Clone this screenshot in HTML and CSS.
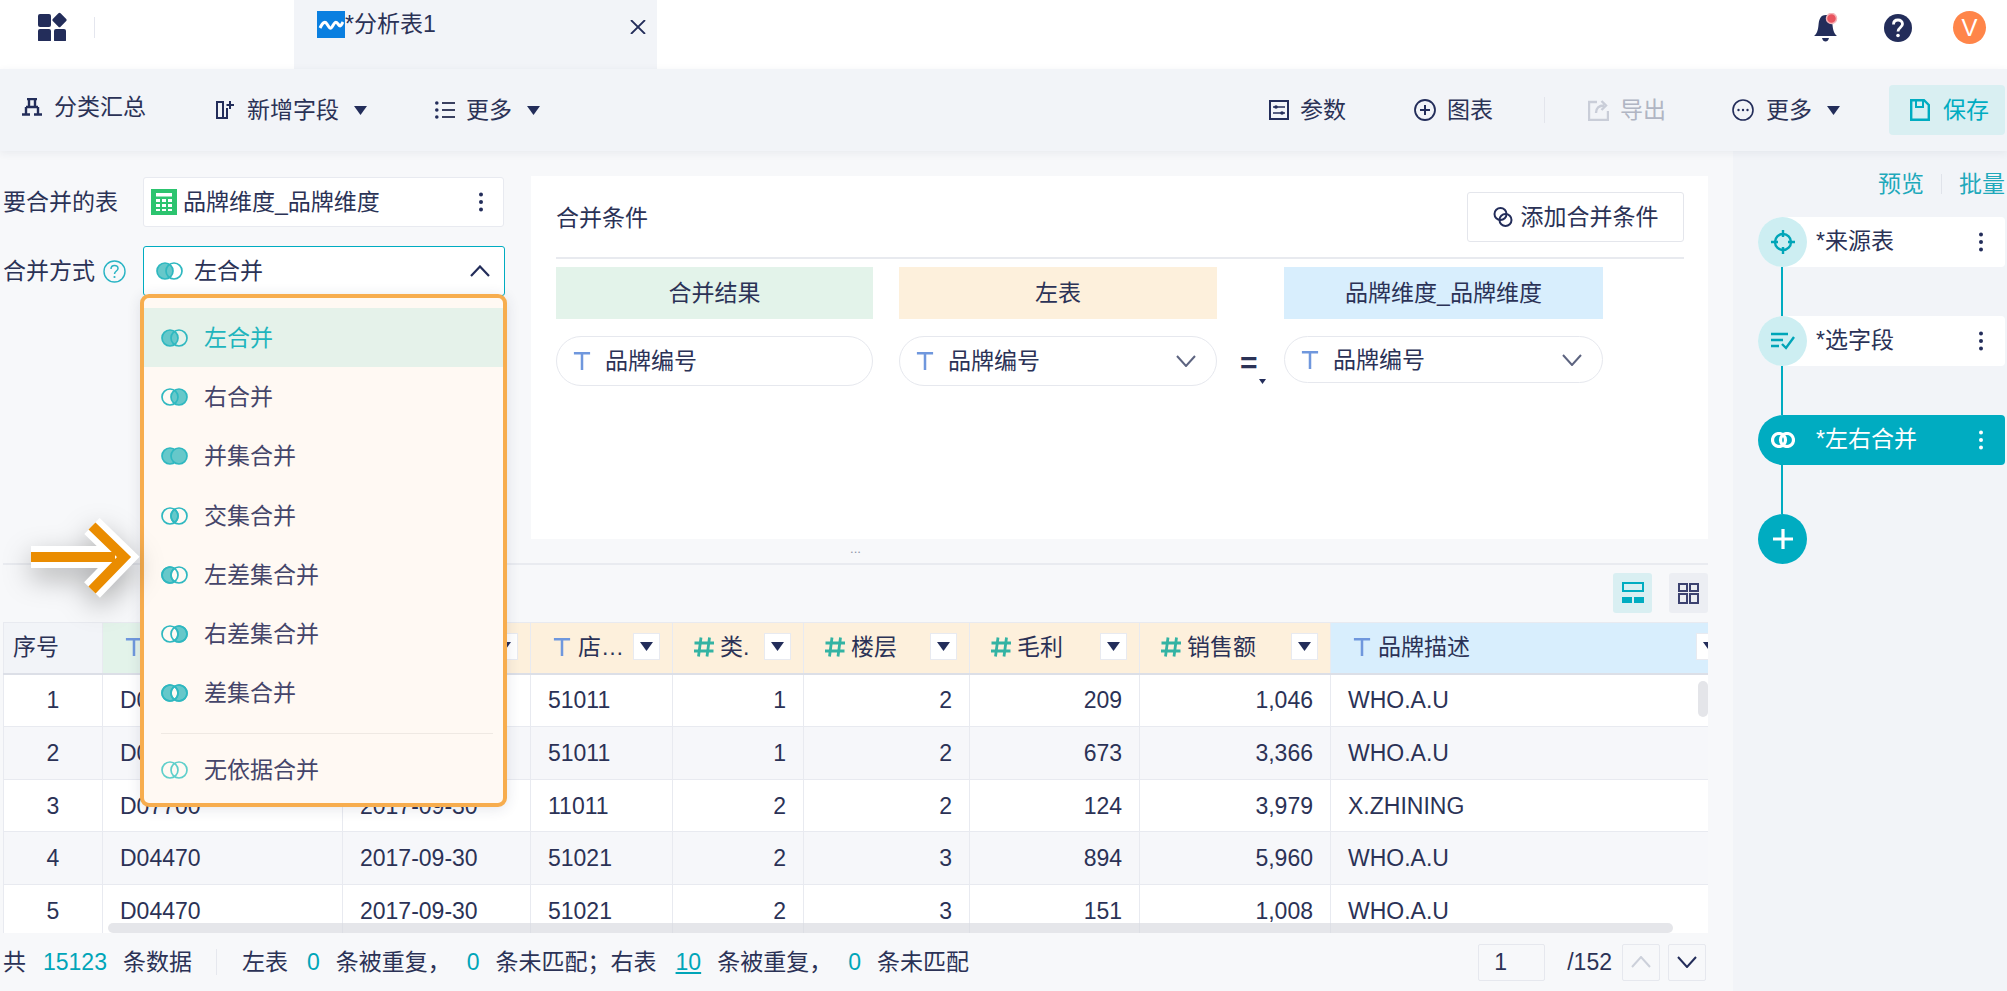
FILE: index.html
```html
<!DOCTYPE html>
<html lang="zh-CN">
<head>
<meta charset="utf-8">
<title>分析表1</title>
<link rel="stylesheet" href="styles.css">
</head>
<body>
<svg class="defs" aria-hidden="true">
  <symbol id="t" viewBox="0 0 20 22"><path d="M1 2.500H19M10 2.500V21" fill="none" stroke="#6f97dd" stroke-width="2.800"/></symbol>
  <symbol id="h" viewBox="0 0 22 22"><path d="M8 1.500 5.500 20.500M16.500 1.500 14 20.500M1.500 7H21M1 15H20.500" fill="none" stroke="#33b3a3" stroke-width="2.800"/></symbol>
  <symbol id="caret" viewBox="0 0 13 9"><path d="M0 0H13L6.500 9Z" fill="#232d5a"/></symbol>
  <symbol id="kebab" viewBox="0 0 4 20"><circle cx="2" cy="2.500" r="2"/><circle cx="2" cy="10" r="2"/><circle cx="2" cy="17.500" r="2"/></symbol>
  <symbol id="chev" viewBox="0 0 20 12"><path d="M1 1 10 11 19 1" fill="none" stroke="#5d6480" stroke-width="2"/></symbol>
</svg>

<header class="tabs">
  <div class="brand">
    <svg class="logo" width="30" height="30" viewBox="0 0 30 30"><rect x="0" y="3" width="13" height="13" rx="2"/><rect x="0" y="18" width="13" height="13" rx="2"/><rect x="16" y="18" width="12" height="13" rx="2"/><rect x="16" y="3.500" width="11" height="11" rx="1.500" transform="rotate(45 21.500 9)"/></svg>
    <span class="brand-sep"></span>
  </div>
  <div class="tab">
    <svg class="tab-icon" width="28" height="27" viewBox="0 0 28 27"><rect width="28" height="27" fill="#0a7fe0"/><path d="M3 17C6 11 8 10 10 13S13 19 15 16 18 9 21 13 24 14 26 11" fill="none" stroke="#fff" stroke-width="3"/></svg>
    <span>*分析表1</span>
    <svg class="tab-close" width="16" height="14" viewBox="0 0 16 14"><path d="M1 0 15 14M15 0 1 14" stroke="#232d5a" stroke-width="1.800" fill="none"/></svg>
  </div>
  <div class="top-icons">
    <svg width="26" height="30" viewBox="0 0 26 30"><path d="M13 2C7 2 6 7 5.500 12 5 18 3.500 21 1 23H24C21.500 21 20 18 19.500 12 19 7 18 2 13 2Z" fill="#232d5a"/><path d="M9 25H16Q15 28.500 12.500 28.500 10 28.500 9 25Z" fill="#232d5a"/><circle cx="18.500" cy="5.500" r="5" fill="#e8555f" stroke="#f4b4b8" stroke-width="1.500"/></svg>
    <svg class="help" width="28" height="28" viewBox="0 0 28 28"><circle cx="14" cy="14" r="14" fill="#232d5a"/><path d="M9.500 10.500C9.500 7.500 11.500 6 14 6 16.500 6 18.500 7.500 18.500 10 18.500 13.500 14 13.500 14 17.500" fill="none" stroke="#fff" stroke-width="2.800"/><circle cx="14" cy="21.500" r="1.800" fill="#fff"/></svg>
    <span class="avatar">V</span>
  </div>
</header>

<nav class="toolbar">
  <div class="tool tool-first">
    <svg width="20" height="18" viewBox="0 0 20 18"><path d="M5 1H15M7 1V9M13 1V9M4 9H16M4 9V16M16 9V16M0 16.500H8M12 16.500H20" fill="none" stroke="#232d5a" stroke-width="2.400"/></svg>
    <span>分类汇总</span>
  </div>
  <div class="tool tool-add">
    <svg width="18" height="18" viewBox="0 0 18 18"><path d="M12 17H1V1H7V17M11 7V17" fill="none" stroke="#232d5a" stroke-width="2"/><path d="M14 0V8M10.500 4H18" fill="none" stroke="#232d5a" stroke-width="2"/></svg>
    <span>新增字段</span>
    <svg class="caret"><use href="#caret"/></svg>
  </div>
  <div class="tool tool-list">
    <svg width="20" height="18" viewBox="0 0 20 18"><circle cx="1.800" cy="2" r="1.800" fill="#232d5a"/><circle cx="1.800" cy="9" r="1.800" fill="#232d5a"/><circle cx="1.800" cy="16" r="1.800" fill="#232d5a"/><path d="M7 2H20M7 9H20M7 16H20" stroke="#3a4060" stroke-width="2"/></svg>
    <span>更多</span>
    <svg class="caret"><use href="#caret"/></svg>
  </div>
  <div class="tool tool-right">
    <svg width="20" height="20" viewBox="0 0 20 20"><rect x="1" y="1" width="18" height="18" fill="none" stroke="#232d5a" stroke-width="2"/><path d="M4 7H16M4 13H16" stroke="#232d5a" stroke-width="1.600"/><circle cx="7" cy="7" r="1.800" fill="#232d5a"/><circle cx="13" cy="13" r="1.800" fill="#232d5a"/></svg>
    <span>参数</span>
  </div>
  <div class="tool tool-chart">
    <svg width="22" height="22" viewBox="0 0 22 22"><circle cx="11" cy="11" r="10" fill="none" stroke="#232d5a" stroke-width="1.800"/><path d="M11 6V16M6 11H16" stroke="#232d5a" stroke-width="2"/></svg>
    <span>图表</span>
  </div>
  <span class="tool-sep"></span>
  <div class="tool tool-disabled">
    <svg width="21" height="22" viewBox="0 0 21 22"><path d="M9 3H1V21H20V12" fill="none" stroke="#c9cdd8" stroke-width="2.400"/><path d="M8 14C8 9 11 6.500 16 6.500M13.500 2 18 6.500 13.500 11" fill="none" stroke="#c9cdd8" stroke-width="2.400"/></svg>
    <span>导出</span>
  </div>
  <div class="tool tool-more">
    <svg width="22" height="22" viewBox="0 0 22 22"><circle cx="11" cy="11" r="10" fill="none" stroke="#232d5a" stroke-width="1.600"/><circle cx="6.500" cy="11" r="1.200" fill="#232d5a"/><circle cx="11" cy="11" r="1.200" fill="#232d5a"/><circle cx="15.500" cy="11" r="1.200" fill="#232d5a"/></svg>
    <span>更多</span>
    <svg class="caret"><use href="#caret"/></svg>
  </div>
  <button class="save">
    <svg width="20" height="22" viewBox="0 0 20 22"><path d="M1.200 1.200H14L18.800 6V20.800H1.200Z" fill="none" stroke="#00acc1" stroke-width="2.400"/><path d="M6 1.500V8H13V1.500" fill="none" stroke="#00acc1" stroke-width="2"/></svg>
    <span>保存</span>
  </button>
</nav>

<main class="main">
  <section class="content">
    <div class="config">
      <div class="form">
        <div class="form-row form-row-table">
          <label class="form-label">要合并的表</label>
          <div class="field">
            <svg width="26" height="26" viewBox="0 0 26 26"><rect width="26" height="26" fill="#2cc46f"/><rect x="5" y="4" width="16" height="3.500" fill="#fff"/><path d="M5 10H9V13H5ZM11 10H15V13H11ZM17 10H21V13H17ZM5 15H9V18H5ZM11 15H15V18H11ZM17 15H21V18H17ZM5 20H9V22H5ZM11 20H15V22H11ZM17 20H21V22H17Z" fill="#fff"/></svg>
            <span class="field-text">品牌维度_品牌维度</span>
            <svg class="kebab"><use href="#kebab"/></svg>
          </div>
        </div>
        <div class="form-row">
          <label class="form-label form-label-help">合并方式
            <svg class="help-mark" width="23" height="23" viewBox="0 0 23 23"><circle cx="11.500" cy="11.500" r="10.500" fill="none" stroke="#29b4c4" stroke-width="1.400"/><path d="M8 9C8 6.500 9.500 5.500 11.500 5.500 13.500 5.500 15 6.700 15 8.500 15 11 11.500 11 11.500 14" fill="none" stroke="#29b4c4" stroke-width="1.500"/><circle cx="11.500" cy="17" r="1.100" fill="#29b4c4"/></svg>
          </label>
          <div class="field field-open">
            <svg class="ring" viewBox="0 0 27 18"><circle class="f" cx="9" cy="9" r="8"/><circle cx="18" cy="9" r="8"/></svg>
            <span class="field-text field-text-select">左合并</span>
            <svg class="chev-up" width="20" height="12" viewBox="0 0 20 12"><path d="M1 11 10 1.500 19 11" fill="none" stroke="#232d5a" stroke-width="2.200"/></svg>
            <ul class="menu">
              <li class="menu-item menu-item-on"><svg class="ring" viewBox="0 0 27 18"><circle class="f" cx="9" cy="9" r="8"/><circle cx="18" cy="9" r="8"/></svg>左合并</li>
              <li class="menu-item"><svg class="ring" viewBox="0 0 27 18"><circle class="f" cx="18" cy="9" r="8"/><circle cx="9" cy="9" r="8"/></svg>右合并</li>
              <li class="menu-item"><svg class="ring" viewBox="0 0 27 18"><circle class="f" cx="9" cy="9" r="8"/><circle class="f" cx="18" cy="9" r="8"/></svg>并集合并</li>
              <li class="menu-item"><svg class="ring" viewBox="0 0 27 18"><path class="f" d="M13.500 2.390A8 8 0 0 1 13.500 15.610 8 8 0 0 1 13.500 2.390Z"/><circle cx="9" cy="9" r="8"/><circle cx="18" cy="9" r="8"/></svg>交集合并</li>
              <li class="menu-item"><svg class="ring" viewBox="0 0 27 18"><path class="f" d="M13.500 2.390A8 8 0 1 0 13.500 15.610 8 8 0 0 1 13.500 2.390Z"/><circle cx="9" cy="9" r="8"/><circle cx="18" cy="9" r="8"/></svg>左差集合并</li>
              <li class="menu-item"><svg class="ring" viewBox="0 0 27 18"><path class="f" d="M13.500 2.390A8 8 0 1 1 13.500 15.610 8 8 0 0 0 13.500 2.390Z"/><circle cx="9" cy="9" r="8"/><circle cx="18" cy="9" r="8"/></svg>右差集合并</li>
              <li class="menu-item"><svg class="ring" viewBox="0 0 27 18"><path class="f" d="M13.500 2.390A8 8 0 1 0 13.500 15.610 8 8 0 0 1 13.500 2.390Z"/><path class="f" d="M13.500 2.390A8 8 0 1 1 13.500 15.610 8 8 0 0 0 13.500 2.390Z"/><circle cx="9" cy="9" r="8"/><circle cx="18" cy="9" r="8"/></svg>差集合并</li>
              <li class="menu-divider"></li>
              <li class="menu-item"><svg class="ring ring-none" viewBox="0 0 27 18"><circle cx="9" cy="9" r="8"/><circle cx="18" cy="9" r="8"/></svg>无依据合并</li>
            </ul>
          </div>
        </div>
      </div>

      <div class="panel">
        <div class="panel-head">
          <span>合并条件</span>
          <button class="add-btn">
            <svg width="20" height="22" viewBox="0 0 20 22"><circle cx="7.500" cy="8" r="6" fill="none" stroke="#232d5a" stroke-width="2"/><circle cx="12.500" cy="14" r="6" fill="none" stroke="#232d5a" stroke-width="2"/></svg>
            添加合并条件
          </button>
        </div>
        <div class="cond">
          <div class="cond-head c1 bg-green">合并结果</div>
          <div class="cond-head c2 bg-orange">左表</div>
          <div class="cond-head c3 bg-blue">品牌维度_品牌维度</div>
          <div class="pill c1"><svg class="t"><use href="#t"/></svg>品牌编号</div>
          <div class="pill c2"><svg class="t"><use href="#t"/></svg>品牌编号<svg class="chev"><use href="#chev"/></svg></div>
          <div class="eq">=<svg class="eq-caret" viewBox="0 0 13 9"><use href="#caret"/></svg></div>
          <div class="pill pill-short c3"><svg class="t"><use href="#t"/></svg>品牌编号<svg class="chev"><use href="#chev"/></svg></div>
        </div>
      </div>
    </div>

    <div class="splitter">...</div>

    <div class="view-row">
      <button class="view-btn view-btn-on">
        <svg width="22" height="22" viewBox="0 0 22 22"><rect x="1" y="1" width="20" height="8" fill="none" stroke="#00acc1" stroke-width="2"/><rect x="0" y="15" width="10" height="6" fill="#00acc1"/><rect x="12" y="15" width="10" height="6" fill="#00acc1"/></svg>
      </button>
      <button class="view-btn">
        <svg width="21" height="21" viewBox="0 0 21 21"><path d="M1 1H9V8H1ZM12 1H20V8H12ZM1 11H9V20H1ZM12 11H20V20H12Z" fill="none" stroke="#3c4270" stroke-width="2"/></svg>
      </button>
    </div>

    <div class="table-wrap">
      <table class="data">
        <colgroup>
          <col class="w0"><col class="w1"><col class="w2"><col class="w3"><col class="w4"><col class="w5"><col class="w6"><col class="w7"><col class="w8">
        </colgroup>
        <thead>
          <tr>
            <th class="th-idx">序号</th>
            <th class="bg-green"><div class="th"><svg class="t"><use href="#t"/></svg><span>编号</span><i class="th-btn"><svg class="caret"><use href="#caret"/></svg></i></div></th>
            <th class="bg-orange"><div class="th"><svg class="t"><use href="#t"/></svg><span>日期</span><i class="th-btn"><svg class="caret"><use href="#caret"/></svg></i></div></th>
            <th class="bg-orange"><div class="th"><svg class="t"><use href="#t"/></svg><span>店…</span><i class="th-btn"><svg class="caret"><use href="#caret"/></svg></i></div></th>
            <th class="bg-orange"><div class="th"><svg class="hash"><use href="#h"/></svg><span>类.</span><i class="th-btn"><svg class="caret"><use href="#caret"/></svg></i></div></th>
            <th class="bg-orange"><div class="th"><svg class="hash"><use href="#h"/></svg><span>楼层</span><i class="th-btn"><svg class="caret"><use href="#caret"/></svg></i></div></th>
            <th class="bg-orange"><div class="th"><svg class="hash"><use href="#h"/></svg><span>毛利</span><i class="th-btn"><svg class="caret"><use href="#caret"/></svg></i></div></th>
            <th class="bg-orange"><div class="th"><svg class="hash"><use href="#h"/></svg><span>销售额</span><i class="th-btn"><svg class="caret"><use href="#caret"/></svg></i></div></th>
            <th class="bg-blue"><div class="th"><svg class="t"><use href="#t"/></svg><span>品牌描述</span><i class="th-btn"><svg class="caret"><use href="#caret"/></svg></i></div></th>
          </tr>
        </thead>
        <tbody>
          <tr><td class="ctr">1</td><td>D04470</td><td>2017-09-30</td><td>51011</td><td class="num">1</td><td class="num">2</td><td class="num">209</td><td class="num">1,046</td><td>WHO.A.U</td></tr>
          <tr><td class="ctr">2</td><td>D04470</td><td>2017-09-30</td><td>51011</td><td class="num">1</td><td class="num">2</td><td class="num">673</td><td class="num">3,366</td><td>WHO.A.U</td></tr>
          <tr><td class="ctr">3</td><td>D07700</td><td>2017-09-30</td><td>11011</td><td class="num">2</td><td class="num">2</td><td class="num">124</td><td class="num">3,979</td><td>X.ZHINING</td></tr>
          <tr><td class="ctr">4</td><td>D04470</td><td>2017-09-30</td><td>51021</td><td class="num">2</td><td class="num">3</td><td class="num">894</td><td class="num">5,960</td><td>WHO.A.U</td></tr>
          <tr><td class="ctr">5</td><td>D04470</td><td>2017-09-30</td><td>51021</td><td class="num">2</td><td class="num">3</td><td class="num">151</td><td class="num">1,008</td><td>WHO.A.U</td></tr>
        </tbody>
      </table>
      <span class="scroll-x"></span>
      <span class="scroll-y"></span>
    </div>

    <footer class="foot">
      <span>共</span><span class="teal foot-total">15123</span><span>条数据</span>
      <span class="foot-sep"></span>
      <span class="foot-left">左表</span><span class="teal">0</span><span>条被重复，</span><span class="teal">0</span><span class="foot-wide">条未匹配；右表</span><span class="teal link">10</span><span>条被重复，</span><span class="teal">0</span><span>条未匹配</span>
      <div class="pager">
        <span class="page-input">1</span>
        <span class="page-total">/152</span>
        <button class="page-btn"><svg width="20" height="12" viewBox="0 0 20 12"><path d="M1 11 10 1 19 11" fill="none" stroke="#ccd0da" stroke-width="2"/></svg></button>
        <button class="page-btn"><svg width="20" height="12" viewBox="0 0 20 12"><path d="M1 1 10 11 19 1" fill="none" stroke="#232d5a" stroke-width="2"/></svg></button>
      </div>
    </footer>
  </section>

  <aside class="side">
    <div class="side-links"><span>预览</span><i class="side-sep"></i><span>批量</span></div>
    <div class="flow">
      <div class="node">
        <span class="node-dot"><svg width="24" height="24" viewBox="0 0 24 24"><circle cx="12" cy="12" r="8" fill="none" stroke="#00a5b8" stroke-width="2.400"/><path d="M12 0V7M12 17V24M0 12H7M17 12H24" stroke="#00a5b8" stroke-width="2.400"/></svg></span>
        <span class="node-text">*来源表</span>
        <svg class="kebab"><use href="#kebab"/></svg>
      </div>
      <span class="link-line"></span>
      <div class="node">
        <span class="node-dot"><svg width="24" height="18" viewBox="0 0 24 18"><path d="M0 2H17M0 8H12M0 14H8" stroke="#00a5b8" stroke-width="2.400"/><path d="M11 12 15 16 23 5" fill="none" stroke="#00a5b8" stroke-width="2.400"/></svg></span>
        <span class="node-text">*选字段</span>
        <svg class="kebab"><use href="#kebab"/></svg>
      </div>
      <span class="link-line"></span>
      <div class="node node-on">
        <span class="node-dot"><svg width="24" height="16" viewBox="0 0 24 16"><circle cx="8" cy="8" r="6.500" fill="none" stroke="#fff" stroke-width="3.200"/><circle cx="16" cy="8" r="6.500" fill="none" stroke="#fff" stroke-width="3.200"/></svg></span>
        <span class="node-text">*左右合并</span>
        <svg class="kebab"><use href="#kebab"/></svg>
      </div>
      <span class="link-line"></span>
      <button class="node-add"><svg width="22" height="22" viewBox="0 0 22 22"><path d="M11 1V21M1 11H21" stroke="#fff" stroke-width="3.200"/></svg></button>
    </div>
  </aside>
</main>

<svg class="arrow" width="130" height="110" viewBox="0 0 130 110">
  <path d="M16 52H100M77 21 109 52 77 85" fill="none" stroke="#fff" stroke-width="22" stroke-linejoin="miter"/>
  <path d="M16 52H100M77 21 109 52 77 85" fill="none" stroke="#ea8c00" stroke-width="10" stroke-linejoin="miter"/>
</svg>
</body>
</html>
```
FILE: styles.css
```css
* { box-sizing: border-box; }
html, body { margin: 0; height: 100%; }
body {
  width: 2007px;
  height: 991px;
  overflow: hidden;
  position: relative;
  font: 23px/30px "Liberation Sans", "Noto Sans CJK SC", sans-serif;
  color: #2b3256;
  background: #f7f8fa;
  display: flex;
  flex-direction: column;
}
button { font: inherit; color: inherit; border: 0; background: none; padding: 0; cursor: pointer; }
ul { list-style: none; margin: 0; padding: 0; }
i { font-style: normal; }
.defs { display: none; }

/* Tabs */
.tabs { height: 69px; flex: none; background: #fff; display: flex; }
.brand { width: 294px; display: flex; padding: 11px 0 0 38px; }
.logo { fill: #232d5a; }
.brand-sep { width: 1px; height: 21px; margin: 6px 0 0 26px; background: #e4e6ee; }
.tab { width: 363px; background: #f2f4f8; display: flex; align-items: flex-start; padding: 12px 11px 0 23px; }
.tab-icon { margin-top: -1px; }
.tab span { line-height: 24px; }
.tab-close { margin: 8px 0 0 auto; }
.top-icons { margin-left: auto; height: 55px; display: flex; align-items: center; padding-right: 21px; }
.help { margin-left: 45px; }
.avatar { width: 33px; height: 33px; margin-left: 41px; border-radius: 50%; background: #ff8549; color: #fff; text-align: center; line-height: 33px; font-size: 24px; }

/* Toolbar */
.toolbar { height: 82px; flex: none; background: #f2f4f8; display: flex; align-items: center; padding: 0 2px 0 22px; position: relative; z-index: 2; box-shadow: 0 2px 8px rgba(40, 50, 80, .07); }
.tool { display: flex; align-items: center; gap: 13px; margin-left: 68px; }
.caret { width: 13px; height: 9px; }
.tool .caret { margin-left: 2px; }
.tool-first { margin: 0 0 6px; gap: 12px; }
.tool-add { margin-left: 70px; }
.tool-list { margin-left: 68px; gap: 11px; }
.tool-list .caret { margin-left: 4px; }
.tool-right { margin-left: auto; gap: 11px; }
.tool-chart { margin-left: 68px; gap: 11px; }
.tool-sep { width: 1px; height: 26px; margin-left: 51px; background: #e3e5ec; }
.tool-disabled { margin-left: 43px; gap: 11px; color: #b0b5c3; }
.tool-more { margin-left: 66px; gap: 12px; }
.tool-more .caret { margin-left: 3px; }
.save { width: 116px; height: 50px; margin-left: 49px; display: flex; align-items: center; gap: 13px; padding-left: 21px; border-radius: 4px; background: #d9eff2; color: #00acc1; }

/* Layout */
.main { flex: 1; display: flex; min-height: 0; }
.content { width: 1733px; flex: none; padding: 0 25px 0 3px; display: flex; flex-direction: column; }
.config { height: 388px; flex: none; padding-top: 25px; display: flex; }

/* Form */
.form { width: 528px; flex: none; padding-top: 1px; }
.form-row { display: flex; align-items: center; }
.form-row-table { margin-bottom: 19px; }
.form-label { width: 140px; flex: none; display: flex; align-items: center; gap: 8px; }
.field { width: 361px; height: 50px; border: 1px solid #e8eaf0; border-radius: 3px; background: #fff; display: flex; align-items: center; padding: 0 20px 0 7px; position: relative; }
.field-text { margin-left: 6px; }
.kebab { width: 4px; height: 20px; margin-left: auto; fill: #232d5a; }
.field-open { width: 362px; border-color: #00acc1; padding-left: 12px; }
.field-text-select { margin-left: 11px; }
.chev-up { margin-left: auto; margin-right: -6px; }
.ring { width: 27px; height: 18px; flex: none; fill: none; stroke: #2fb8c0; stroke-width: 1.700; }
.ring .f { fill: #66c8ca; }
.ring-none { stroke: #5fcfcb; }

/* Dropdown */
.menu { position: absolute; top: 47px; left: -4px; width: 367px; z-index: 5; padding: 10px 0 4px; border: 4px solid #f7ad4e; border-radius: 9px; background: #fff9f3; box-shadow: 0 2px 14px rgba(40, 50, 80, .12); color: #45456a; }
.menu-item { height: 59.300px; display: flex; align-items: center; gap: 16px; padding-left: 17px; }
.menu-item-on { background: #e5f2ea; color: #1fb5bd; }
.menu-divider { height: 1px; margin: 10px 10px 6px 17px; background: #efe9e3; }

/* Merge panel */
.panel { flex: 1; background: #fff; padding: 16px 24px 0 25px; }
.panel-head { height: 67px; display: flex; align-items: flex-start; justify-content: space-between; border-bottom: 2px solid #e8eaef; }
.panel-head > span { margin-top: 11px; }
.add-btn { width: 217px; height: 50px; display: flex; align-items: center; justify-content: center; gap: 8px; border: 1px solid #e4e6ec; border-radius: 3px; background: #fff; }
.cond { display: grid; grid-template-columns: 317px 26px 318px 67px 319px; grid-template-rows: 52px 50px; row-gap: 17px; margin-top: 8px; }
.c1 { grid-column: 1; }
.c2 { grid-column: 3; }
.c3 { grid-column: 5; }
.cond-head { display: flex; align-items: center; justify-content: center; grid-row: 1; }
.bg-green { background: #e3f3ea; }
.bg-orange { background: #fdf0dc; }
.bg-blue { background: #d8eefd; }
.pill { grid-row: 2; display: flex; align-items: center; height: 50px; padding: 0 20px 0 16px; border: 1px solid #e6e8ee; border-radius: 25px; background: #fff; }
.pill-short { height: 47px; }
.t { width: 18px; height: 20px; margin-right: 14px; flex: none; }
.chev { width: 20px; height: 12px; margin-left: auto; }
.eq { grid-column: 4; grid-row: 2; position: relative; font-size: 30px; font-weight: 700; line-height: 50px; padding: 2px 0 0 23px; }
.eq-caret { position: absolute; left: 42px; top: 43px; width: 7px; height: 5px; }

/* Splitter */
.splitter { height: 26px; flex: none; border-bottom: 2px solid #e9ebf0; text-align: center; font-size: 13px; line-height: 20px; color: #8d93a6; }

/* View toggle */
.view-row { height: 57px; flex: none; display: flex; justify-content: flex-end; gap: 17px; padding-top: 8px; }
.view-btn { width: 39px; height: 40px; border-radius: 3px; background: #eceef3; display: flex; align-items: center; justify-content: center; }
.view-btn-on { background: #d9eff2; }

/* Table */
.table-wrap { height: 311px; flex: none; position: relative; overflow: hidden; }
.data { width: 1732px; table-layout: fixed; border-collapse: collapse; }
.w0 { width: 99px; } .w1 { width: 240px; } .w2 { width: 188px; } .w3 { width: 142px; } .w4 { width: 131px; }
.w5 { width: 166px; } .w6 { width: 170px; } .w7 { width: 191px; } .w8 { width: 405px; }
.data th { height: 51px; padding: 0; font-weight: 400; text-align: left; border: 1px solid #e8eaf0; border-bottom: 2px solid #dcdfe7; }
.data .th-idx { background: #f2f4f8; padding: 0 0 2px 9px; }
.th { display: flex; align-items: center; height: 49px; padding: 0 12px 2px 20px; }
.th .t { margin: 0 7px 0 2px; }
.hash { width: 22px; height: 22px; margin-right: 5px; flex: none; }
.th-btn { width: 27px; height: 27px; margin-left: auto; flex: none; background: #fff; border: 1px solid #e8eaf0; display: flex; align-items: center; justify-content: center; }
.data tbody tr { height: 53px; background: #fff; }
.data tbody tr:nth-child(even) { background: #f6f7fa; }
.data tbody tr:nth-child(3) { height: 52px; }
.data td { padding: 0 17px; border: 1px solid #e8eaf0; white-space: nowrap; }
.data .ctr { text-align: center; padding: 0; }
.data .num { text-align: right; }
.scroll-x { position: absolute; left: 105px; top: 301px; width: 1565px; height: 10px; border-radius: 5px; background: rgba(215, 217, 222, .65); }
.scroll-y { position: absolute; right: 0; top: 59px; width: 10px; height: 36px; border-radius: 5px; background: #e4e5e9; }

/* Footer */
.foot { flex: 1; display: flex; align-items: center; gap: 16px; }
.teal { color: #00a5b8; }
.link { text-decoration: underline; }
.foot-total { margin-left: 1px; }
.foot-left { margin-right: 3px; }
.foot-wide { padding-right: 3px; }
.foot-sep { width: 1px; height: 26px; margin: 0 9px 0 8px; background: #e6e8ee; }
.pager { margin-left: auto; margin-right: 2px; display: flex; align-items: center; }
.page-input { width: 67px; height: 37px; padding-left: 15px; border: 1px solid #e6e8ee; border-radius: 2px; line-height: 35px; background: #f7f8fa; }
.page-total { margin: 0 10px 0 22px; }
.page-btn { width: 38px; height: 37px; margin-left: 8px; border: 1px solid #e6e8ee; border-radius: 2px; display: flex; align-items: center; justify-content: center; }
.page-total + .page-btn { margin-left: 0; }

/* Side flow */
.side { flex: 1; background: #f2f4f8; padding: 0 2px 0 25px; }
.side-links { height: 66px; padding-top: 18px; display: flex; justify-content: flex-end; align-items: flex-start; color: #1fa9bb; }
.side-sep { width: 1px; height: 20px; margin: 5px 17px 0; background: #e0e3ea; }
.flow { display: flex; flex-direction: column; align-items: flex-start; }
.node { width: 247px; height: 50px; display: flex; align-items: center; padding-right: 22px; border-radius: 25px 4px 4px 25px; background: #fff; }
.node-dot { width: 49px; height: 50px; flex: none; border-radius: 50%; background: #cdeef2; display: flex; align-items: center; justify-content: center; }
.node-text { margin: 0 0 2px 9px; }
.node-on { background: #00acc1; color: #fff; }
.node-on .node-dot { background: none; }
.node-on .kebab { fill: #fff; }
.link-line { width: 2px; height: 49px; margin-left: 23px; background: #00acc1; }
.node-add { width: 49px; height: 50px; border-radius: 50%; background: #00acc1; display: flex; align-items: center; justify-content: center; }

/* Annotation arrow */
.arrow { position: absolute; left: 15px; top: 505px; z-index: 6; filter: drop-shadow(0 10px 14px rgba(0, 0, 0, .3)); }
```
